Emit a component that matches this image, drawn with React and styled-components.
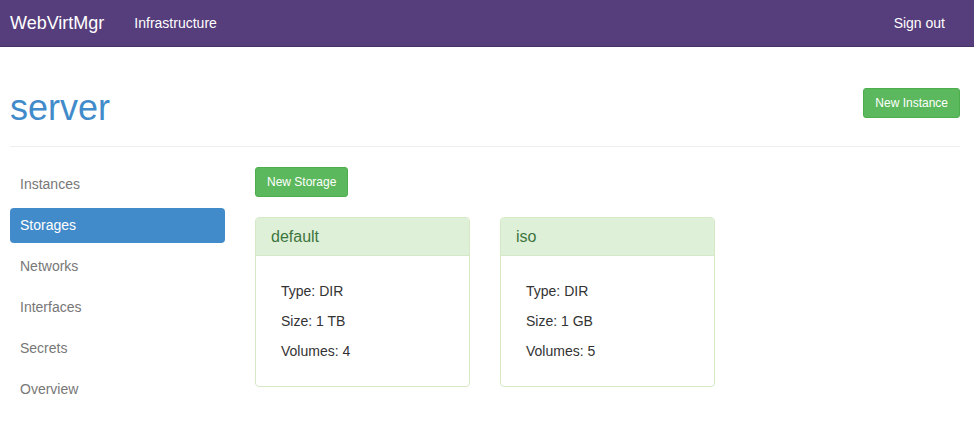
import styled, { createGlobalStyle } from "styled-components";

const GlobalStyle = createGlobalStyle`
  body {
    margin: 0;
    font-family: "Liberation Sans", Arial, sans-serif;
    font-size: 14px;
    color: #333;
    background: #fff;
  }
`;

const Navbar = styled.div`
  display: flex;
  align-items: center;
  height: 46px;
  padding: 0 29px 0 10px;
  background: #563d7c;
  border-bottom: 1px solid #463265;
`;

const Brand = styled.span`
  font-size: 18px;
  color: #fff;
  margin-right: 30px;
`;

const NavLink = styled.span`
  font-size: 14px;
  color: #fff;
  margin-left: ${(props) => (props.$right ? "auto" : "0")};
`;

const Page = styled.div`
  padding: 41px 14px 0 10px;
`;

const Header = styled.div`
  display: flex;
  justify-content: space-between;
  align-items: flex-start;
  padding-bottom: 18px;
  border-bottom: 1px solid #eee;
`;

const Title = styled.h1`
  margin: 0;
  font-size: 36px;
  font-weight: 400;
  line-height: 40px;
  color: #428bca;
`;

const Button = styled.button`
  height: 30px;
  padding: 0 11px;
  font-family: "Liberation Sans", Arial, sans-serif;
  font-size: 12px;
  color: #fff;
  background: #5cb85c;
  border: 1px solid #4cae4c;
  border-radius: 3px;
  cursor: pointer;
`;

const Body = styled.div`
  display: grid;
  grid-template-columns: 215px 1fr;
  column-gap: 30px;
  padding-top: 20px;
`;

const Nav = styled.ul`
  list-style: none;
  margin: 0;
  padding: 0;
  display: flex;
  flex-direction: column;
  gap: 6px;
`;

const NavItem = styled.li`
  height: 35px;
  line-height: 35px;
  padding: 0 10px;
  border-radius: 4px;
  color: ${(props) => (props.$active ? "#fff" : "#777")};
  background: ${(props) => (props.$active ? "#428bca" : "transparent")};
`;

const Main = styled.div`
  display: flex;
  flex-direction: column;
  align-items: flex-start;
  gap: 20px;
`;

const Cards = styled.div`
  display: flex;
  gap: 30px;
`;

const Card = styled.div`
  width: 213px;
  border: 1px solid #d6e9c6;
  border-radius: 4px;
  overflow: hidden;
`;

const CardHeader = styled.div`
  padding: 10px 15px;
  font-size: 16px;
  line-height: 17px;
  color: #3c763d;
  background: #dff0d8;
  border-bottom: 1px solid #d6e9c6;
`;

const CardBody = styled.div`
  padding: 20px 25px;
`;

const Row = styled.div`
  line-height: 30px;
  color: #333;
`;

const menu = ["Instances", "Storages", "Networks", "Interfaces", "Secrets", "Overview"];

const pools = [
  { name: "default", type: "DIR", size: "1 TB", volumes: 4 },
  { name: "iso", type: "DIR", size: "1 GB", volumes: 5 },
];

const App = () => (
  <>
    <GlobalStyle />
    <Navbar>
      <Brand>WebVirtMgr</Brand>
      <NavLink>Infrastructure</NavLink>
      <NavLink $right>Sign out</NavLink>
    </Navbar>
    <Page>
      <Header>
        <Title>server</Title>
        <Button>New Instance</Button>
      </Header>
      <Body>
        <Nav>
          {menu.map((item) => (
            <NavItem key={item} $active={item === "Storages"}>
              {item}
            </NavItem>
          ))}
        </Nav>
        <Main>
          <Button>New Storage</Button>
          <Cards>
            {pools.map((pool) => (
              <Card key={pool.name}>
                <CardHeader>{pool.name}</CardHeader>
                <CardBody>
                  <Row>Type: {pool.type}</Row>
                  <Row>Size: {pool.size}</Row>
                  <Row>Volumes: {pool.volumes}</Row>
                </CardBody>
              </Card>
            ))}
          </Cards>
        </Main>
      </Body>
    </Page>
  </>
);

export default App;
